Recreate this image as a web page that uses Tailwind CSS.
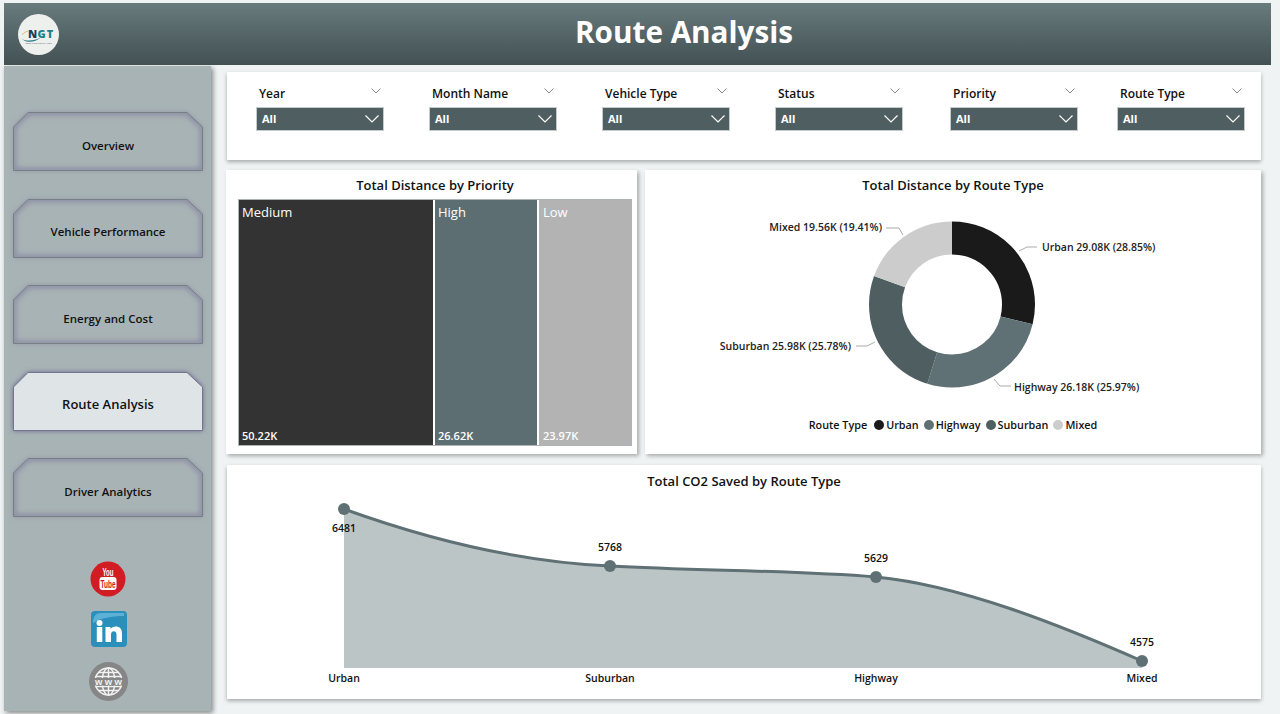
<!DOCTYPE html>
<html lang="en">
<head>
  <meta charset="UTF-8">
  <meta name="viewport" content="width=device-width, initial-scale=1.0">
  <title>Route Analysis</title>
  <script src="https://cdn.jsdelivr.net/npm/@tailwindcss/browser@4"></script>
</head>
<body class="bg-[#f0f3f3] font-['Open_Sans','Noto_Sans',sans-serif] text-[#111] overflow-hidden">
  <div class="w-[1280px] h-[714px] pt-[3px] pl-[4px] flex flex-col">

    <!-- Header -->
    <header class="w-[1267px] h-[62px] shrink-0 bg-gradient-to-b from-[#687b7d] to-[#435153] flex items-center relative">
      <svg class="ml-[14px]" width="41" height="41" viewBox="0 0 41 41">
        <circle cx="20.500" cy="20.500" r="20.500" fill="#eef0ee"/>
        <path d="M4 25C9 27.500 16 27 23 23.500C17 28.500 9 29.500 4 25Z" fill="#2d7f86"/>
        <path d="M4 21C6 18.500 8 17.500 10 17" fill="none" stroke="#c9b15a" stroke-width=".8"/>
        <text x="10" y="23.500" font-size="11" font-weight="800" fill="#1c3f52" font-family="Open Sans, sans-serif">N</text>
        <text x="19.500" y="23.500" font-size="11" font-weight="800" fill="#1f7f88" font-family="Open Sans, sans-serif" letter-spacing="1">GT</text>
        <text x="20.500" y="30" font-size="2.500" fill="#667" text-anchor="middle" font-family="Open Sans, sans-serif">BEST NGO TEMPLATES</text>
      </svg>
      <h1 class="absolute left-[571px] top-[8px] text-[29.700px] leading-[42px] font-bold text-white">Route Analysis</h1>
    </header>

    <div class="flex flex-1 min-h-0">
      <!-- Sidebar -->
      <aside class="w-[207px] h-[645px] mt-px shrink-0 bg-[#a8b3b5] shadow-[2px_2px_5px_rgba(0,0,0,0.45)] flex flex-col items-center pt-[46px]">
        <svg class="absolute" width="0" height="0"><defs>
          <filter id="blur" x="-10%" y="-30%" width="120%" height="160%"><feGaussianBlur stdDeviation="2.500"/></filter>
          <clipPath id="btn"><path d="M15 .5H174L189.500 15V58.500H.5V15Z"/></clipPath>
        </defs></svg>
        <nav class="flex flex-col gap-[27.500px] ml-[1px]">
          <a class="relative w-[190px] h-[59px] flex items-center justify-center pt-[8px] text-[11.500px] font-semibold">
            <svg class="absolute inset-0 overflow-visible" width="190" height="59" viewBox="0 0 190 59"><path d="M15 .5H174L189.500 15V58.500H.5V15Z" fill="#8d90a6" filter="url(#blur)"/><path d="M15 .5H174L189.500 15V58.500H.5V15Z" fill="#a8b3b5"/><path d="M15 .5H174L189.500 15V58.500H.5V15Z" fill="none" stroke="#8d90a6" stroke-width="6" filter="url(#blur)" clip-path="url(#btn)"/><path d="M15 .5H174L189.500 15V58.500H.5V15Z" fill="none" stroke="#767f84"/></svg>
            <span class="relative">Overview</span>
          </a>
          <a class="relative w-[190px] h-[59px] flex items-center justify-center pt-[8px] text-[11.500px] font-semibold">
            <svg class="absolute inset-0 overflow-visible" width="190" height="59" viewBox="0 0 190 59"><path d="M15 .5H174L189.500 15V58.500H.5V15Z" fill="#8d90a6" filter="url(#blur)"/><path d="M15 .5H174L189.500 15V58.500H.5V15Z" fill="#a8b3b5"/><path d="M15 .5H174L189.500 15V58.500H.5V15Z" fill="none" stroke="#8d90a6" stroke-width="6" filter="url(#blur)" clip-path="url(#btn)"/><path d="M15 .5H174L189.500 15V58.500H.5V15Z" fill="none" stroke="#767f84"/></svg>
            <span class="relative">Vehicle Performance</span>
          </a>
          <a class="relative w-[190px] h-[59px] flex items-center justify-center pt-[8px] text-[11.500px] font-semibold">
            <svg class="absolute inset-0 overflow-visible" width="190" height="59" viewBox="0 0 190 59"><path d="M15 .5H174L189.500 15V58.500H.5V15Z" fill="#8d90a6" filter="url(#blur)"/><path d="M15 .5H174L189.500 15V58.500H.5V15Z" fill="#a8b3b5"/><path d="M15 .5H174L189.500 15V58.500H.5V15Z" fill="none" stroke="#8d90a6" stroke-width="6" filter="url(#blur)" clip-path="url(#btn)"/><path d="M15 .5H174L189.500 15V58.500H.5V15Z" fill="none" stroke="#767f84"/></svg>
            <span class="relative">Energy and Cost</span>
          </a>
          <a class="relative w-[190px] h-[59px] flex items-center justify-center pt-[8px] text-[13px] font-semibold">
            <svg class="absolute inset-0 overflow-visible" width="190" height="59" viewBox="0 0 190 59"><path d="M15 .5H174L189.500 15V58.500H.5V15Z" fill="#5d5a88" filter="url(#blur)"/><path d="M15 .5H174L189.500 15V58.500H.5V15Z" fill="#dfe5e7" stroke="#77748f"/></svg>
            <span class="relative">Route Analysis</span>
          </a>
          <a class="relative w-[190px] h-[59px] flex items-center justify-center pt-[8px] text-[11.500px] font-semibold">
            <svg class="absolute inset-0 overflow-visible" width="190" height="59" viewBox="0 0 190 59"><path d="M15 .5H174L189.500 15V58.500H.5V15Z" fill="#8d90a6" filter="url(#blur)"/><path d="M15 .5H174L189.500 15V58.500H.5V15Z" fill="#a8b3b5"/><path d="M15 .5H174L189.500 15V58.500H.5V15Z" fill="none" stroke="#8d90a6" stroke-width="6" filter="url(#blur)" clip-path="url(#btn)"/><path d="M15 .5H174L189.500 15V58.500H.5V15Z" fill="none" stroke="#767f84"/></svg>
            <span class="relative">Driver Analytics</span>
          </a>
        </nav>

        <div class="mt-[44px] ml-[1px] flex flex-col items-center">
          <!-- YouTube -->
          <svg width="36" height="36" viewBox="0 0 36 36">
            <circle cx="18" cy="18" r="17.500" fill="#d01c22"/>
            <text x="18" y="15" text-anchor="middle" font-size="11" font-weight="700" fill="#fff" font-family="Liberation Sans, sans-serif" textLength="11" lengthAdjust="spacingAndGlyphs">You</text>
            <rect x="9.500" y="16" width="17" height="13" rx="3" fill="#fff"/>
            <text x="18" y="26.500" text-anchor="middle" font-size="11" font-weight="700" fill="#d01c22" font-family="Liberation Sans, sans-serif" textLength="15" lengthAdjust="spacingAndGlyphs">Tube</text>
          </svg>
          <!-- LinkedIn -->
          <svg class="mt-[14px] ml-[2px]" width="36" height="36" viewBox="0 0 36 36">
            <rect width="36" height="36" rx="4" fill="#2b8fbb"/>
            <path d="M2 12C2 5 5 2 10 2H33V5C20 5 10 7 2 12Z" fill="#5cb2d6"/>
            <circle cx="8.500" cy="12" r="3" fill="#fff"/>
            <rect x="5.800" y="16" width="5.500" height="15" fill="#fff"/>
            <path d="M14.500 16H19.500V18C20.500 16.500 22.500 15.500 24.500 15.500C29 15.500 31 18 31 22.500V31H25.500V23.500C25.500 21.500 24.500 20.200 22.800 20.200C21 20.200 20 21.500 20 23.500V31H14.500Z" fill="#fff"/>
          </svg>
          <!-- Website -->
          <svg class="mt-[15px]" width="39" height="39" viewBox="0 0 39 39">
            <circle cx="19.500" cy="19.500" r="19.500" fill="#868686"/>
            <g fill="none" stroke="#f2f2f2" stroke-width="1.500">
              <circle cx="19.500" cy="19.500" r="13.500"/>
              <ellipse cx="19.500" cy="19.500" rx="6.500" ry="13.500"/>
              <path d="M19.500 6V33M9.500 10.500H29.500M6.500 14.500H32.500M6.500 24.500H32.500M9.500 28.500H29.500"/>
            </g>
            <rect x="4" y="16" width="31" height="7.500" fill="#868686"/>
            <text x="19.500" y="23" text-anchor="middle" font-size="9.500" font-weight="700" fill="#f2f2f2" font-family="Liberation Sans, sans-serif" textLength="27">www</text>
          </svg>
        </div>
      </aside>

      <!-- Content -->
      <main class="flex-1 min-w-0 pl-[15px] pt-[7px] flex flex-col">

        <!-- Slicers -->
        <section class="ml-px w-[1034px] h-[88px] shrink-0 bg-white shadow-[0_2px_4px_rgba(0,0,0,0.3)] relative flex pt-[14px]">
          <div class="w-[126px] ml-[30px] mr-[47px] shrink-0">
            <div class="flex justify-between items-start h-[22px] px-[2px]"><span class="text-[12px] font-semibold leading-[16px]">Year</span><svg class="mt-[2px]" width="10" height="6" viewBox="0 0 10 6"><path d="M.5.5 5 5 9.500.5" fill="none" stroke="#888"/></svg></div>
            <div class="h-[22px] bg-[#4f5f61] ring-1 ring-[#c4cbcc] flex items-center justify-between pl-[5px] pr-[4px]"><span class="text-[11px] font-bold text-white pt-px">All</span><svg width="14" height="8" viewBox="0 0 14 8"><path d="M.5.5 7 7 13.500.5" fill="none" stroke="#fff" stroke-width="1.200"/></svg></div>
          </div>
          <div class="w-[126px] mr-[47px] shrink-0">
            <div class="flex justify-between items-start h-[22px] px-[2px]"><span class="text-[12px] font-semibold leading-[16px]">Month Name</span><svg class="mt-[2px]" width="10" height="6" viewBox="0 0 10 6"><path d="M.5.5 5 5 9.500.5" fill="none" stroke="#888"/></svg></div>
            <div class="h-[22px] bg-[#4f5f61] ring-1 ring-[#c4cbcc] flex items-center justify-between pl-[5px] pr-[4px]"><span class="text-[11px] font-bold text-white pt-px">All</span><svg width="14" height="8" viewBox="0 0 14 8"><path d="M.5.5 7 7 13.500.5" fill="none" stroke="#fff" stroke-width="1.200"/></svg></div>
          </div>
          <div class="w-[126px] mr-[47px] shrink-0">
            <div class="flex justify-between items-start h-[22px] px-[2px]"><span class="text-[12px] font-semibold leading-[16px]">Vehicle Type</span><svg class="mt-[2px]" width="10" height="6" viewBox="0 0 10 6"><path d="M.5.5 5 5 9.500.5" fill="none" stroke="#888"/></svg></div>
            <div class="h-[22px] bg-[#4f5f61] ring-1 ring-[#c4cbcc] flex items-center justify-between pl-[5px] pr-[4px]"><span class="text-[11px] font-bold text-white pt-px">All</span><svg width="14" height="8" viewBox="0 0 14 8"><path d="M.5.5 7 7 13.500.5" fill="none" stroke="#fff" stroke-width="1.200"/></svg></div>
          </div>
          <div class="w-[126px] mr-[49px] shrink-0">
            <div class="flex justify-between items-start h-[22px] px-[2px]"><span class="text-[12px] font-semibold leading-[16px]">Status</span><svg class="mt-[2px]" width="10" height="6" viewBox="0 0 10 6"><path d="M.5.5 5 5 9.500.5" fill="none" stroke="#888"/></svg></div>
            <div class="h-[22px] bg-[#4f5f61] ring-1 ring-[#c4cbcc] flex items-center justify-between pl-[5px] pr-[4px]"><span class="text-[11px] font-bold text-white pt-px">All</span><svg width="14" height="8" viewBox="0 0 14 8"><path d="M.5.5 7 7 13.500.5" fill="none" stroke="#fff" stroke-width="1.200"/></svg></div>
          </div>
          <div class="w-[126px] mr-[41px] shrink-0">
            <div class="flex justify-between items-start h-[22px] px-[2px]"><span class="text-[12px] font-semibold leading-[16px]">Priority</span><svg class="mt-[2px]" width="10" height="6" viewBox="0 0 10 6"><path d="M.5.5 5 5 9.500.5" fill="none" stroke="#888"/></svg></div>
            <div class="h-[22px] bg-[#4f5f61] ring-1 ring-[#c4cbcc] flex items-center justify-between pl-[5px] pr-[4px]"><span class="text-[11px] font-bold text-white pt-px">All</span><svg width="14" height="8" viewBox="0 0 14 8"><path d="M.5.5 7 7 13.500.5" fill="none" stroke="#fff" stroke-width="1.200"/></svg></div>
          </div>
          <div class="w-[126px] shrink-0">
            <div class="flex justify-between items-start h-[22px] px-[2px]"><span class="text-[12px] font-semibold leading-[16px]">Route Type</span><svg class="mt-[2px]" width="10" height="6" viewBox="0 0 10 6"><path d="M.5.5 5 5 9.500.5" fill="none" stroke="#888"/></svg></div>
            <div class="h-[22px] bg-[#4f5f61] ring-1 ring-[#c4cbcc] flex items-center justify-between pl-[5px] pr-[4px]"><span class="text-[11px] font-bold text-white pt-px">All</span><svg width="14" height="8" viewBox="0 0 14 8"><path d="M.5.5 7 7 13.500.5" fill="none" stroke="#fff" stroke-width="1.200"/></svg></div>
          </div>
        </section>

        <div class="flex mt-[10px] gap-[8px] shrink-0">
          <!-- Treemap -->
          <section class="w-[411px] h-[284px] bg-white shadow-[2px_2px_4px_rgba(0,0,0,0.3)] flex flex-col pt-[6px]">
            <h2 class="text-[13px] leading-[18px] font-semibold text-center pl-[7px]">Total Distance by Priority</h2>
            <div class="mt-[5px] ml-[12px] w-[394px] h-[247px] flex gap-[2px] border border-[#aeb4b5] bg-white text-white">
              <div class="w-[194px] bg-[#333333] flex flex-col justify-between pl-[3px] pb-[1px]"><span class="text-[13px] leading-[24px]">Medium</span><span class="text-[11px] font-semibold leading-[16px]">50.22K</span></div>
              <div class="w-[102px] bg-[#5c6e71] flex flex-col justify-between pl-[3px] pb-[1px]"><span class="text-[13px] leading-[24px]">High</span><span class="text-[11px] font-semibold leading-[16px]">26.62K</span></div>
              <div class="flex-1 bg-[#b3b3b3] flex flex-col justify-between pl-[4px] pb-[1px]"><span class="text-[13px] leading-[24px]">Low</span><span class="text-[11px] font-semibold leading-[16px]">23.97K</span></div>
            </div>
          </section>

          <!-- Donut -->
          <section class="w-[616px] h-[284px] bg-white shadow-[2px_2px_4px_rgba(0,0,0,0.3)] flex flex-col items-center pt-[6px]">
            <h2 class="text-[13px] leading-[18px] font-semibold">Total Distance by Route Type</h2>
            <svg class="mt-[3px]" width="616" height="218" viewBox="645 197 616 218" font-size="10.500" font-weight="600" fill="#222">
              <g fill="none" stroke-width="33" transform="rotate(-90 952 304.500)">
                <circle cx="952" cy="304.500" r="66.500" pathLength="100" stroke="#1a1a1a" stroke-dasharray="28.85 100"/>
                <circle cx="952" cy="304.500" r="66.500" pathLength="100" stroke="#5f7174" stroke-dasharray="25.97 100" stroke-dashoffset="-28.85"/>
                <circle cx="952" cy="304.500" r="66.500" pathLength="100" stroke="#4f5f61" stroke-dasharray="25.78 100" stroke-dashoffset="-54.82"/>
                <circle cx="952" cy="304.500" r="66.500" pathLength="100" stroke="#cccccc" stroke-dasharray="19.40 100" stroke-dashoffset="-80.60"/>
              </g>
              <g fill="none" stroke="#aaa">
                <path d="M1019 251 1027 247H1037"/>
                <path d="M994 379 1000 386H1011"/>
                <path d="M875 342 867 346H856"/>
                <path d="M903 235 899 228H886"/>
              </g>
              <text x="1042" y="251">Urban 29.08K (28.85%)</text>
              <text x="1014" y="391">Highway 26.18K (25.97%)</text>
              <text x="851" y="350" text-anchor="end">Suburban 25.98K (25.78%)</text>
              <text x="882" y="231" text-anchor="end">Mixed 19.56K (19.41%)</text>
            </svg>
            <div class="flex items-center text-[10.800px] leading-[16px] font-semibold mt-[2px]">
              <span class="mr-[7px]">Route Type</span>
              <span class="w-[10px] h-[10px] rounded-full bg-[#1a1a1a] mr-[2px]"></span><span class="mr-[5px]">Urban</span>
              <span class="w-[10px] h-[10px] rounded-full bg-[#5f7174] mr-[2px]"></span><span class="mr-[5px]">Highway</span>
              <span class="w-[10px] h-[10px] rounded-full bg-[#4f5f61] mr-[2px]"></span><span class="mr-[5px]">Suburban</span>
              <span class="w-[10px] h-[10px] rounded-full bg-[#cccccc] mr-[2px]"></span><span>Mixed</span>
            </div>
          </section>
        </div>

        <!-- Area chart -->
        <section class="ml-px mt-[11px] w-[1034px] h-[234px] shrink-0 bg-white shadow-[0_2px_4px_rgba(0,0,0,0.3)] flex flex-col items-center pt-[7px]">
          <h2 class="text-[13px] leading-[18px] font-semibold">Total CO2 Saved by Route Type</h2>
          <svg class="block" width="1034" height="209" viewBox="227 490 1034 209" font-size="10.500" font-weight="600" fill="#111" text-anchor="middle">
            <path d="M344 509C430 540 520 562 610 566C700 571 790 570 876 577C960 585 1060 625 1142 661V668H344Z" fill="#bcc5c6"/>
            <path d="M344 509C430 540 520 562 610 566C700 571 790 570 876 577C960 585 1060 625 1142 661" fill="none" stroke="#5f7174" stroke-width="3"/>
            <circle cx="344" cy="509" r="6" fill="#5f7174"/>
            <circle cx="610" cy="566" r="6" fill="#5f7174"/>
            <circle cx="876" cy="577" r="6" fill="#5f7174"/>
            <circle cx="1142" cy="661" r="6" fill="#5f7174"/>
            <text x="344" y="532">6481</text>
            <text x="610" y="551">5768</text>
            <text x="876" y="562">5629</text>
            <text x="1142" y="646">4575</text>
            <text x="344" y="682">Urban</text>
            <text x="610" y="682">Suburban</text>
            <text x="876" y="682">Highway</text>
            <text x="1142" y="682">Mixed</text>
          </svg>
        </section>
      </main>
    </div>
  </div>
</body>
</html>
